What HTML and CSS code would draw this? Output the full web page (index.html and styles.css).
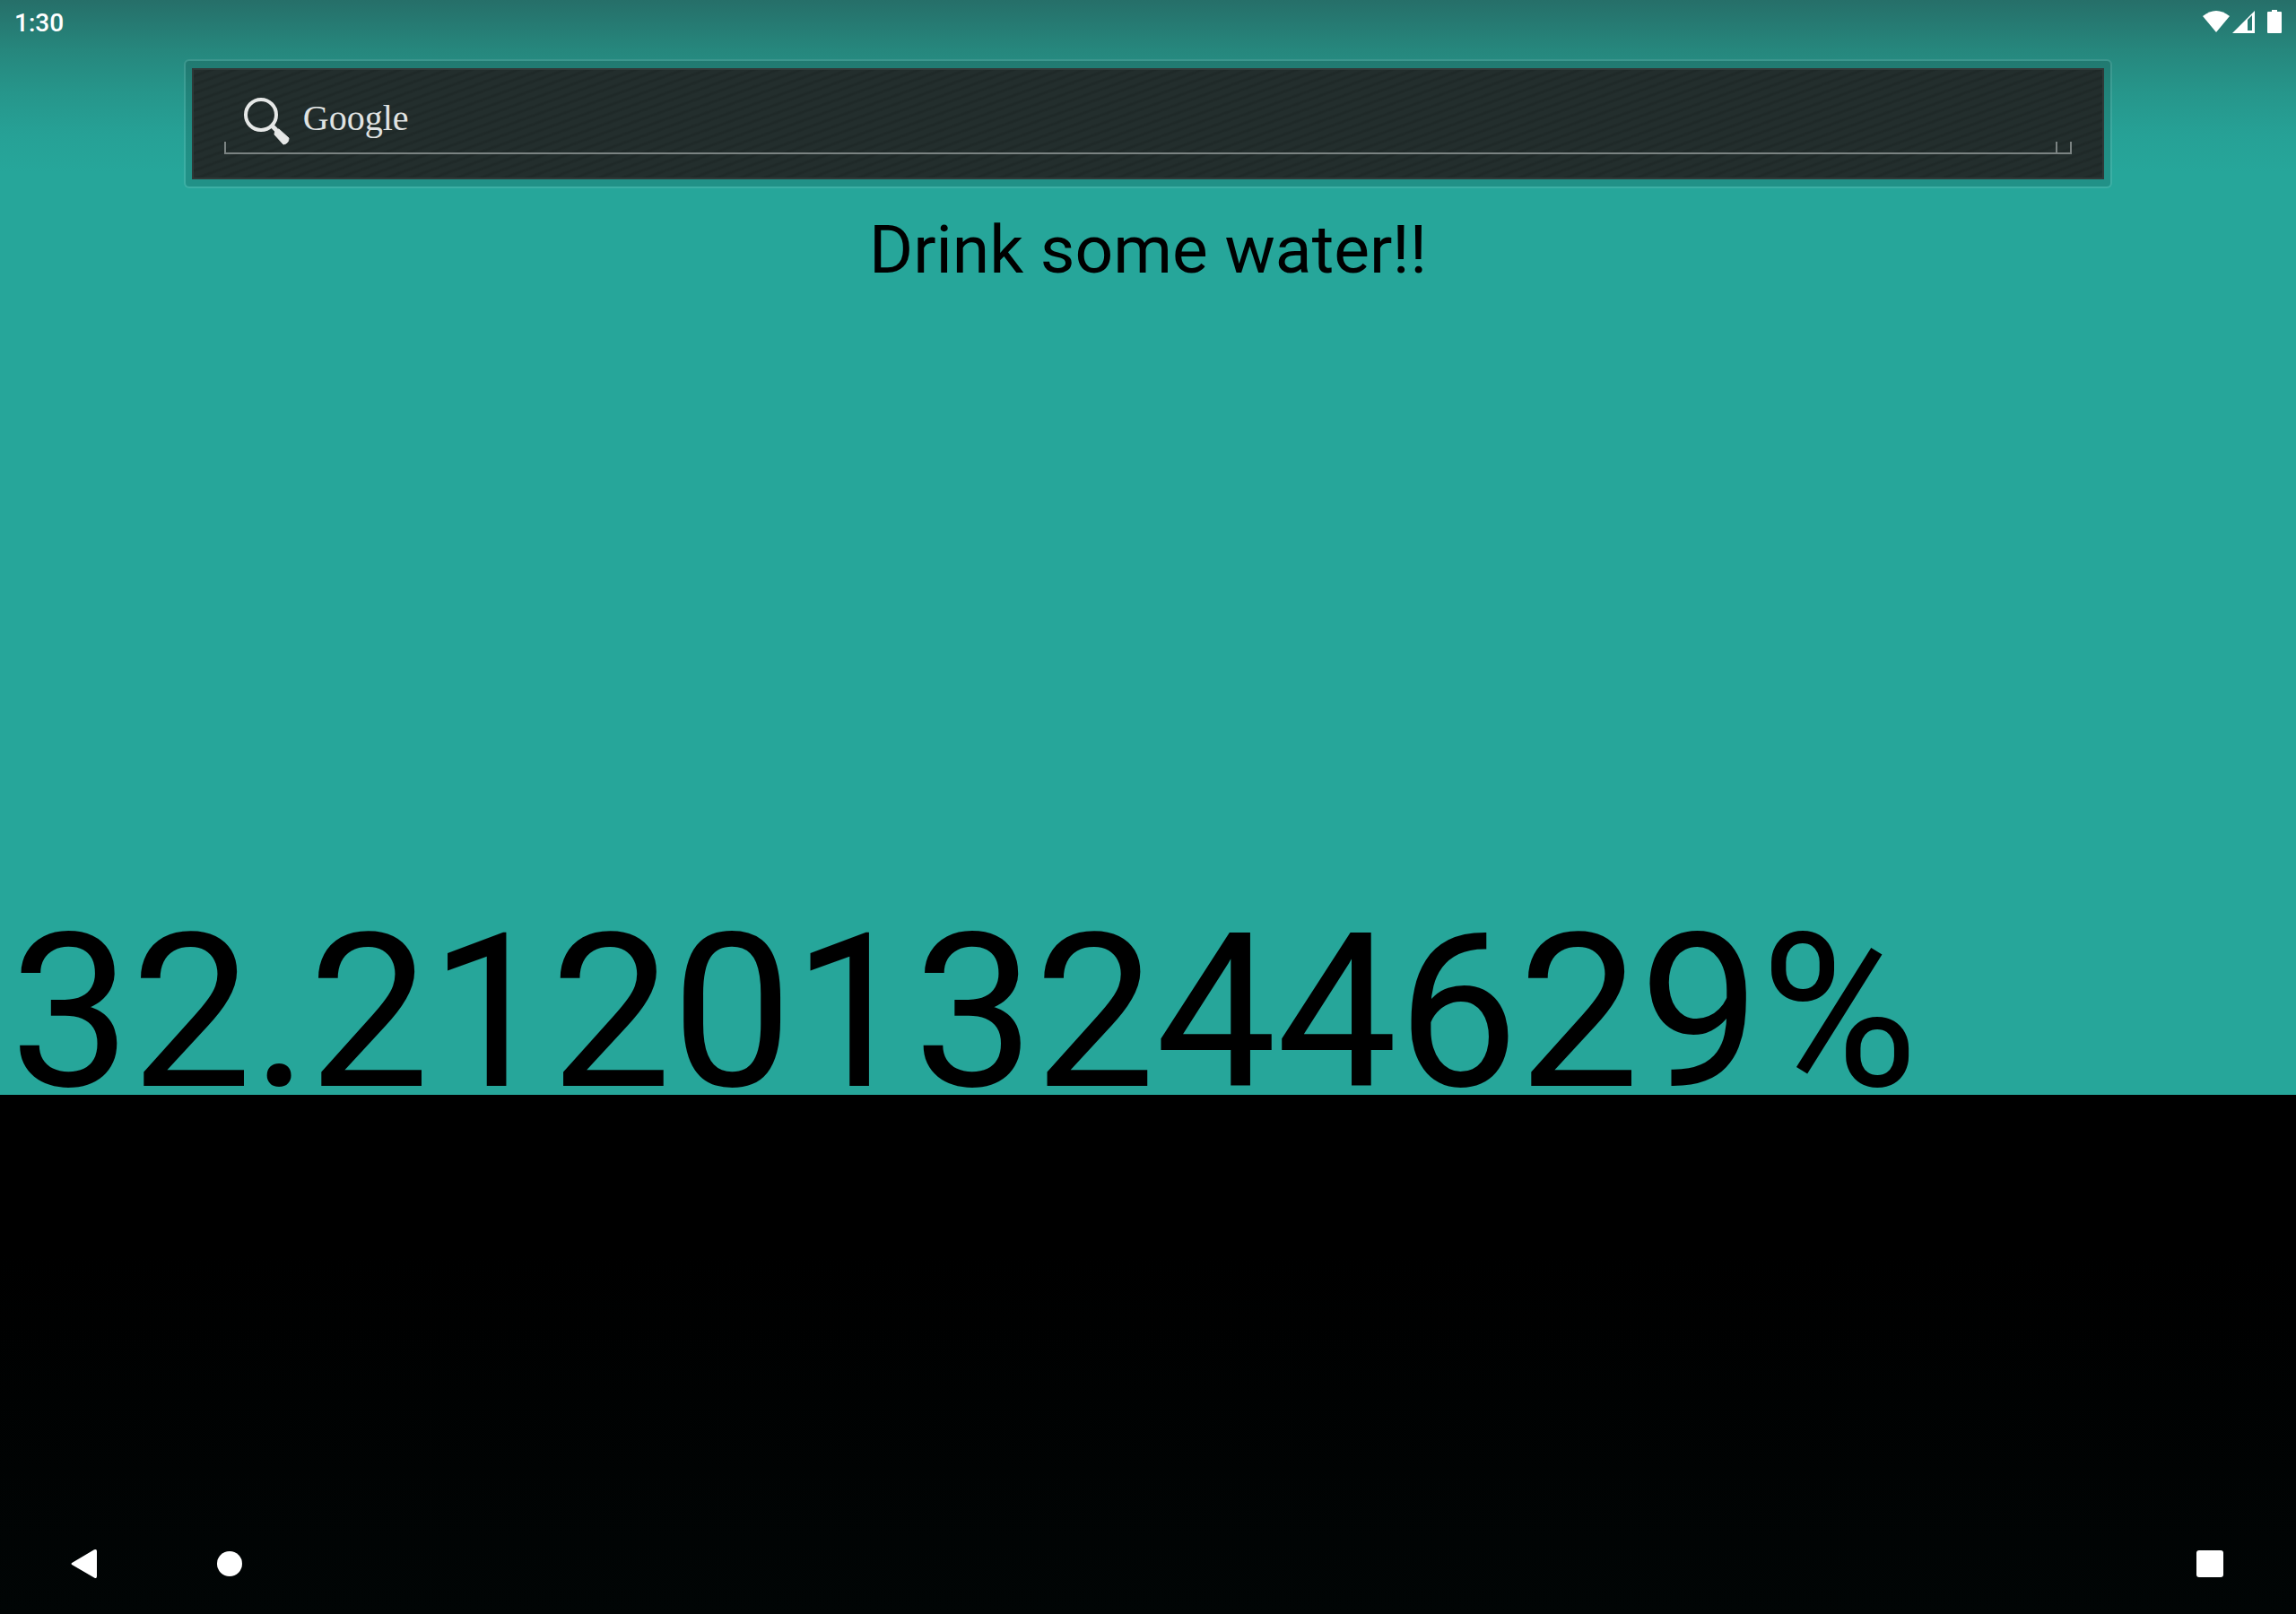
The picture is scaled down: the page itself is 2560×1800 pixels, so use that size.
FILE: index.html
```html
<!DOCTYPE html>
<html lang="en">
<head>
<meta charset="utf-8">
<meta name="viewport" content="width=device-width, initial-scale=1">
<title>Home</title>
<link rel="stylesheet" href="styles.css">
</head>
<body>
<div class="wallpaper">
  <header class="status">
    <time class="clock">1:30</time>
    <svg class="indicators" width="92" height="30" viewBox="0 0 92 30" fill="#fff" aria-hidden="true">
      <path d="M0 7Q15-5 30 7L15 25Z"/>
      <path fill-rule="evenodd" d="M33 26L58 1V26ZM50 11V23H55V6Z"/>
      <path d="M77 0h6v2h4q1 0 1 1v22q0 1-1 1H73q-1 0-1-1V3q0-1 1-1h4z"/>
    </svg>
  </header>
  <form class="widget">
    <div class="plate">
      <button class="search" type="button">
        <svg width="56" height="56" viewBox="0 0 56 56" fill="none" stroke="#e6e8e7" aria-hidden="true">
          <circle cx="21" cy="20" r="17" stroke-width="4"/>
          <path d="M33 32L38 37" stroke-width="5"/>
          <path d="M37 36L41 36L52 46Q52 52 46 53L36 42Z" fill="#e6e8e7" stroke-width="1" stroke-linejoin="round"/>
        </svg>
        <span class="brand">Google</span>
      </button>
      <span class="voice"></span>
    </div>
  </form>
  <main class="content">
    <h1 class="message">Drink some water!!</h1>
    <p class="level">32.212013244629%</p>
  </main>
</div>
<nav class="nav">
  <button class="key" type="button" aria-label="Back">
    <svg width="36" height="36" viewBox="0 0 36 36" fill="#fff"><path d="M5 16.500L29 2.300Q32 1 32 4V32Q32 35 29 33.500L5 19.500Q2 18 5 16.500Z"/></svg>
  </button>
  <button class="key" type="button" aria-label="Home">
    <svg width="36" height="36" viewBox="0 0 36 36" fill="#fff"><circle cx="18" cy="18" r="14"/></svg>
  </button>
  <button class="key recent" type="button" aria-label="Recent apps">
    <svg width="36" height="36" viewBox="0 0 36 36" fill="#fff"><rect x="3" y="3" width="30" height="30" rx="3"/></svg>
  </button>
</nav>
</body>
</html>
```
FILE: styles.css
```css
* {
  box-sizing: border-box;
}

body {
  margin: 0;
  min-height: 100vh;
  display: grid;
  grid-template-rows: 1221fr 579fr;
  background: #000;
  font-family: Roboto, "Liberation Sans", sans-serif;
}

button {
  border: 0;
  padding: 0;
  background: none;
  color: inherit;
}

svg {
  display: block;
}

.wallpaper {
  display: flex;
  flex-direction: column;
  background: linear-gradient(#266f69, #26877d 56px, #26968b 104px, #26a196 150px, #26a69a 192px);
}

.status {
  height: 66px;
  padding: 8px 12px 0 16px;
  display: flex;
  justify-content: space-between;
  align-items: flex-start;
  color: #fff;
}

.clock {
  font-size: 28px;
  font-weight: 500;
  line-height: 36px;
}

.indicators {
  margin-top: 3px;
}

.widget {
  margin: 0 8%;
  padding: 8px 7px;
  border: 2px solid rgba(255, 255, 255, 0.1);
  border-radius: 6px;
  background: rgba(0, 0, 0, 0.12);
  background-clip: padding-box;
}

.plate {
  height: 124px;
  padding: 0 34px 26px;
  display: flex;
  align-items: flex-end;
  border: 2px solid #2f3938;
  background: repeating-linear-gradient(160deg, #232e2d 0 4px, #1f2928 6px 7px, #232e2d 9px);
}

.search {
  flex: 1;
  height: 80px;
  padding: 0 0 8px 20px;
  display: flex;
  align-items: flex-end;
  gap: 12px;
  color: #e0e3e2;
  background:
    linear-gradient(#7b8382, #7b8382) left bottom / 2px 14px no-repeat,
    linear-gradient(#7b8382, #7b8382) left bottom / 100% 2px no-repeat;
}

.brand {
  margin-bottom: 8px;
  font-family: "Liberation Serif", serif;
  font-size: 40px;
  line-height: 48px;
}

.voice {
  width: 18px;
  height: 14px;
  border: 2px solid #7b8382;
  border-top: 0;
}

.content {
  flex: 1;
  display: flex;
  flex-direction: column;
  justify-content: space-between;
  color: #000;
}

.message {
  margin: 24px 0 0;
  font-size: 75px;
  font-weight: 400;
  line-height: 88px;
  text-align: center;
}

.level {
  margin: 0;
  padding-left: 11px;
  font-size: 240px;
  line-height: 184px;
}

.nav {
  padding: 0 60px 20px 58px;
  display: flex;
  align-items: flex-end;
  background: linear-gradient(#000 30%, #010505);
}

.key {
  width: 72px;
  height: 72px;
  display: grid;
  place-items: center;
  margin-right: 90px;
}

.recent {
  margin: 0 0 0 auto;
}
```
